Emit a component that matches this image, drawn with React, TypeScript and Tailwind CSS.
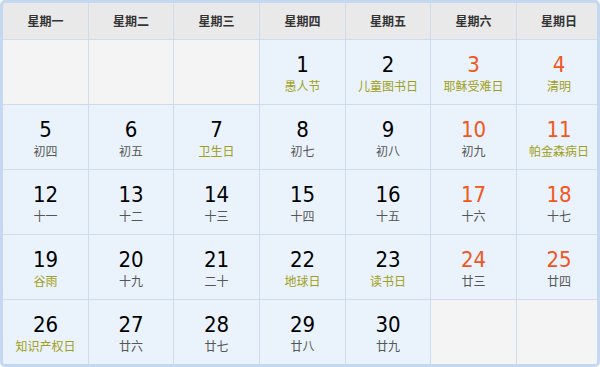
import React from "react";

type Cell = { d?: number; t?: string; hol?: boolean; red?: boolean };

const days = ["星期一", "星期二", "星期三", "星期四", "星期五", "星期六", "星期日"];

const cells: Cell[] = [
  {}, {}, {},
  { d: 1, t: "愚人节", hol: true },
  { d: 2, t: "儿童图书日", hol: true },
  { d: 3, t: "耶稣受难日", hol: true, red: true },
  { d: 4, t: "清明", hol: true, red: true },
  { d: 5, t: "初四" },
  { d: 6, t: "初五" },
  { d: 7, t: "卫生日", hol: true },
  { d: 8, t: "初七" },
  { d: 9, t: "初八" },
  { d: 10, t: "初九", red: true },
  { d: 11, t: "帕金森病日", hol: true, red: true },
  { d: 12, t: "十一" },
  { d: 13, t: "十二" },
  { d: 14, t: "十三" },
  { d: 15, t: "十四" },
  { d: 16, t: "十五" },
  { d: 17, t: "十六", red: true },
  { d: 18, t: "十七", red: true },
  { d: 19, t: "谷雨", hol: true },
  { d: 20, t: "十九" },
  { d: 21, t: "二十" },
  { d: 22, t: "地球日", hol: true },
  { d: 23, t: "读书日", hol: true },
  { d: 24, t: "廿三", red: true },
  { d: 25, t: "廿四", red: true },
  { d: 26, t: "知识产权日", hol: true },
  { d: 27, t: "廿六" },
  { d: 28, t: "廿七" },
  { d: 29, t: "廿八" },
  { d: 30, t: "廿九" },
  {}, {},
];

export default function App() {
  return (
    <div className="w-[600px] h-[367px] bg-white">
      <div className="w-[600px] h-[367px] border-[3px] border-[#c4d8f1] rounded-[5px] overflow-hidden bg-[#cfdcee]">
        <div className="grid grid-cols-[85px_84px_85px_85px_84px_85px_84px] grid-rows-[36px_64px_64px_64px_64px_64px] gap-px h-full">
          {days.map((d) => (
            <div
              key={d}
              className="bg-[#e9e9e9] flex items-center justify-center text-[12px] font-bold text-[#333] [font-family:'Noto_Sans_CJK_SC',sans-serif]"
            >
              {d}
            </div>
          ))}
          {cells.map((c, i) =>
            c.d ? (
              <div key={i} className="bg-[#eaf3fb] flex flex-col items-center pt-[12px]">
                <div
                  className={`text-[22px] leading-[26px] [font-family:'DejaVu_Sans_Condensed','DejaVu_Sans',sans-serif] ${
                    c.red ? "text-[#f2561d]" : "text-[#000]"
                  }`}
                >
                  {c.d}
                </div>
                <div
                  className={`text-[12px] leading-[16px] [font-family:'Noto_Sans_CJK_SC',sans-serif] ${
                    c.hol ? "text-[#a0a018]" : "text-[#555]"
                  }`}
                >
                  {c.t}
                </div>
              </div>
            ) : (
              <div key={i} className="bg-[#f4f4f4]" />
            )
          )}
        </div>
      </div>
    </div>
  );
}
